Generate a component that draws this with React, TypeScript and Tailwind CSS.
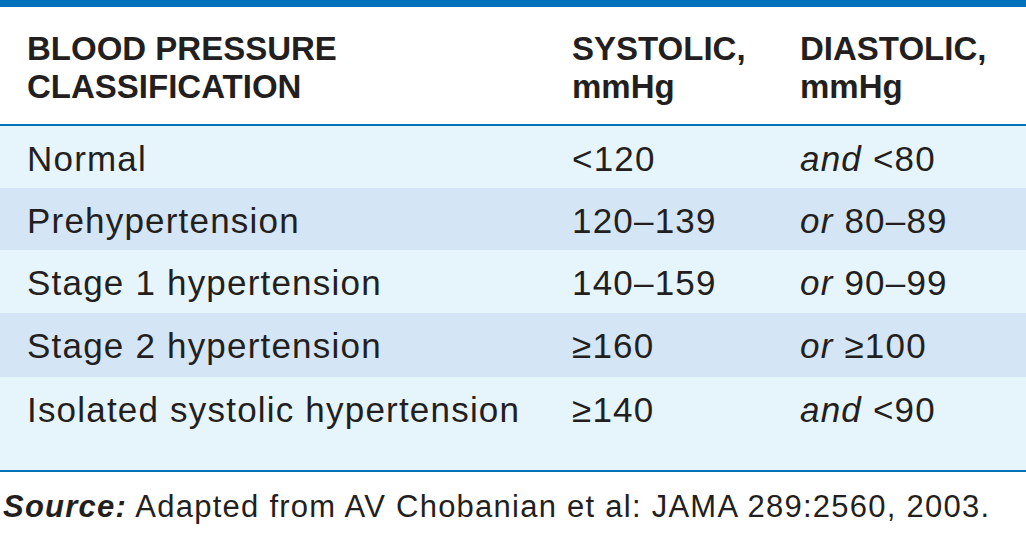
import React from "react";

const rows: { name: string; sys: string; diaI: string; dia: string; dark: boolean; h: string }[] = [
  { name: "Normal", sys: "<120", diaI: "and", dia: " <80", dark: false, h: "h-[62px]" },
  { name: "Prehypertension", sys: "120–139", diaI: "or", dia: " 80–89", dark: true, h: "h-[62px]" },
  { name: "Stage 1 hypertension", sys: "140–159", diaI: "or", dia: " 90–99", dark: false, h: "h-[63px]" },
  { name: "Stage 2 hypertension", sys: "≥160", diaI: "or", dia: " ≥100", dark: true, h: "h-[64px]" },
  { name: "Isolated systolic hypertension", sys: "≥140", diaI: "and", dia: " <90", dark: false, h: "h-[93px]" },
];

export default function App() {
  return (
    <div
      className="w-[1026px] h-[533px] bg-white text-[#231f20] overflow-hidden"
      style={{ fontFamily: '"Liberation Sans", Arial, sans-serif' }}
    >
      <div className="h-[7px] bg-[#0072bc]" />
      <div className="grid grid-cols-[572px_228px_1fr] h-[117px] pt-[23px] text-[33px] leading-[38px] font-bold">
        <div className="pl-[27px]">
          BLOOD PRESSURE
          <br />
          CLASSIFICATION
        </div>
        <div>
          SYSTOLIC,
          <br />
          mmHg
        </div>
        <div>
          DIASTOLIC,
          <br />
          mmHg
        </div>
      </div>
      <div className="h-[2px] bg-[#0072bc]" />
      {rows.map((r) => (
        <div
          key={r.name}
          className={
            "grid grid-cols-[572px_228px_1fr] items-start text-[35px] tracking-[1.2px] leading-[62px] " +
            (r.dark ? "bg-[#d4e5f5] " : "bg-[#e6f4fc] ") +
            r.h
          }
        >
          <div className="pl-[27px] pt-[2px] whitespace-nowrap">{r.name}</div>
          <div className="pt-[2px]">{r.sys}</div>
          <div className="pt-[2px]">
            <span className="italic">{r.diaI}</span>
            {r.dia}
          </div>
        </div>
      ))}
      <div className="h-[2px] bg-[#0072bc]" />
      <div className="pt-[17px] pl-[3px] text-[31px] tracking-[1.25px] leading-[36px] whitespace-nowrap">
        <span className="font-bold italic">Source:</span> Adapted from AV Chobanian et al: JAMA 289:2560, 2003.
      </div>
    </div>
  );
}
